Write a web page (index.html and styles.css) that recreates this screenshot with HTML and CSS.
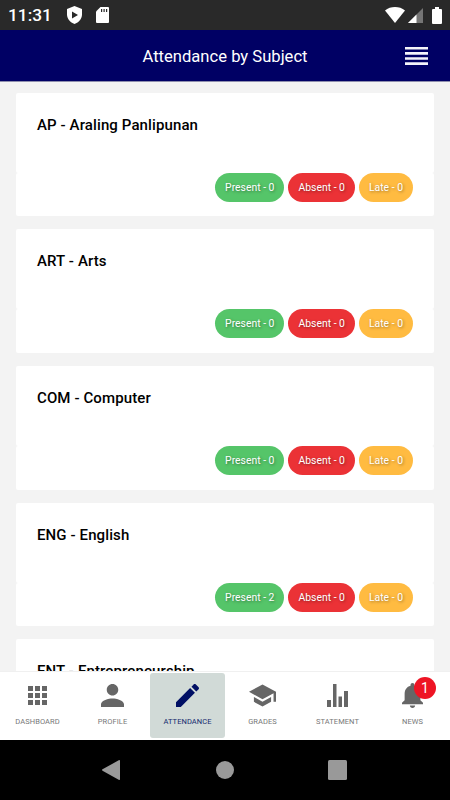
FILE: index.html
```html
<!DOCTYPE html>
<html lang="en">
<head>
  <meta charset="UTF-8">
  <title>Attendance by Subject</title>
  <meta name="viewport" content="width=device-width, initial-scale=1.0">
  <link rel="stylesheet" href="styles.css">
</head>
<body>
  <div class="status-bar">
    <span class="time">11:31</span>
    <svg class="shield" width="15" height="18" viewBox="0 0 15 18"><path fill="#fff" d="M7.5 0L15 3v5.500c0 4.300-3.200 8.100-7.500 9.500C3.200 16.600 0 12.800 0 8.500V3z"/><path fill="#292929" d="M5 5.500v7l6-3.500z"/></svg>
    <svg class="sdcard" width="13" height="16" viewBox="0 0 13 16"><path fill="#fff" d="M4.500 0H12a1 1 0 0 1 1 1v14a1 1 0 0 1-1 1H1a1 1 0 0 1-1-1V4.500z"/><path fill="#292929" d="M5 2h1.200v3H5zM7.500 2h1.200v3H7.500zM10 2h1.200v3H10z"/></svg>
    <div class="status-right">
      <svg width="20" height="16" viewBox="0 0 20 16"><path fill="#fff" d="M10 16L0 3.500C5.500-1.100 14.500-1.100 20 3.500z"/></svg>
      <svg class="signal" width="15" height="15" viewBox="0 0 15 15"><path fill="#757575" d="M15 0v15H0z"/><path fill="#fff" d="M8.500 6.500V15H0z"/></svg>
      <svg class="battery" width="10" height="17" viewBox="0 0 10 17"><path fill="#fff" d="M3 0h4v2h2a1 1 0 0 1 1 1v13a1 1 0 0 1-1 1H1a1 1 0 0 1-1-1V3a1 1 0 0 1 1-1h2z"/></svg>
    </div>
  </div>

  <header>
    <h1>Attendance by Subject</h1>
    <svg class="menu" width="23" height="18" viewBox="0 0 23 18"><path d="M0 0h23v2.600H0zM0 5.100h23v2.600H0zM0 10.200h23v2.600H0zM0 15.300h23v2.600H0z"/></svg>
  </header>

  <main class="subjects">
    <div class="card">
      <h2>AP - Araling Panlipunan</h2>
      <div class="counts">
        <span class="pill present">Present - 0</span>
        <span class="pill absent">Absent - 0</span>
        <span class="pill late">Late - 0</span>
      </div>
    </div>
    <div class="card">
      <h2>ART - Arts</h2>
      <div class="counts">
        <span class="pill present">Present - 0</span>
        <span class="pill absent">Absent - 0</span>
        <span class="pill late">Late - 0</span>
      </div>
    </div>
    <div class="card">
      <h2>COM - Computer</h2>
      <div class="counts">
        <span class="pill present">Present - 0</span>
        <span class="pill absent">Absent - 0</span>
        <span class="pill late">Late - 0</span>
      </div>
    </div>
    <div class="card">
      <h2>ENG - English</h2>
      <div class="counts">
        <span class="pill present">Present - 2</span>
        <span class="pill absent">Absent - 0</span>
        <span class="pill late">Late - 0</span>
      </div>
    </div>
    <div class="card">
      <h2>ENT - Entrepreneurship</h2>
    </div>
  </main>

  <nav class="tabs">
    <a class="tab">
      <span class="icon"><svg width="19" height="19" viewBox="0 0 19 19"><path d="M0 0h5v5H0zM7 0h5v5H7zM14 0h5v5h-5zM0 7h5v5H0zM7 7h5v5H7zM14 7h5v5h-5zM0 14h5v5H0zM7 14h5v5H7zM14 14h5v5h-5z"/></svg></span>
      <span class="label">DASHBOARD</span>
    </a>
    <a class="tab">
      <span class="icon"><svg width="23" height="23" viewBox="4 4 16 16"><path d="M12 12c2.210 0 4-1.790 4-4s-1.790-4-4-4-4 1.790-4 4 1.790 4 4 4zm0 2c-2.670 0-8 1.340-8 4v2h16v-2c0-2.660-5.330-4-8-4z"/></svg></span>
      <span class="label">PROFILE</span>
    </a>
    <a class="tab active">
      <span class="icon"><svg width="23" height="23" viewBox="3 3 18 18"><path d="M3 17.250V21h3.750L17.810 9.940l-3.750-3.750L3 17.250zM20.710 7.040c.39-.39.39-1.020 0-1.410l-2.340-2.340c-.39-.39-1.020-.39-1.410 0l-1.830 1.830 3.750 3.750 1.830-1.830z"/></svg></span>
      <span class="label">ATTENDANCE</span>
    </a>
    <a class="tab">
      <span class="icon"><svg width="27" height="23" viewBox="1 3 22 18"><path d="M5 13.180v4L12 21l7-3.820v-4L12 17l-7-3.820zM12 3L1 9l11 6 9-4.910V17h2V9L12 3z"/></svg></span>
      <span class="label">GRADES</span>
    </a>
    <a class="tab">
      <span class="icon"><svg width="21" height="23" viewBox="0 0 21 23"><path d="M0 16h4v7H0zM6 0h3.500v23H6zM11.500 12.500H15V23h-3.500zM17 7h4v16h-4z"/></svg></span>
      <span class="label">STATEMENT</span>
    </a>
    <a class="tab">
      <span class="icon"><svg width="21" height="25" viewBox="4 2.500 16 19.500" preserveAspectRatio="none"><path d="M12 22c1.100 0 2-.9 2-2h-4c0 1.100.89 2 2 2zm6-6v-5c0-3.070-1.640-5.640-4.500-6.320V4c0-.83-.67-1.500-1.500-1.500s-1.500.67-1.500 1.500v.68C7.630 5.360 6 7.920 6 11v5l-2 2v1h16v-1l-2-2z"/></svg><b class="badge">1</b></span>
      <span class="label">NEWS</span>
    </a>
  </nav>

  <div class="system-nav">
    <svg class="back" width="18" height="20" viewBox="0 0 18 20"><path fill="#999" d="M18 1v18q0 1.500-1.300.7L.5 10.700q-1-.7 0-1.400L16.700.3Q18-.5 18 1z"/></svg>
    <svg width="18" height="18" viewBox="0 0 18 18"><circle fill="#999" cx="9" cy="9" r="9"/></svg>
    <svg width="19" height="20" viewBox="0 0 19 20"><rect fill="#999" width="19" height="20" rx="1.500"/></svg>
  </div>
</body>
</html>
```
FILE: styles.css
```css
* {
  box-sizing: border-box;
}
body {
  margin: 0;
  height: 800px;
  display: flex;
  flex-direction: column;
  overflow: hidden;
  font-family: Roboto, "Liberation Sans", sans-serif;
  background: #f3f3f3;
  color: #000;
}
svg {
  display: block;
  flex: none;
}
.status-bar {
  flex: 0 0 30px;
  display: flex;
  align-items: center;
  padding: 0 8px;
  background: #292929;
  color: #fff;
}
.time {
  width: 59px;
  font-size: 17.300px;
  font-weight: 500;
  line-height: 30px;
}
.sdcard {
  margin-left: 14px;
}
.status-right {
  display: flex;
  align-items: center;
  margin-left: auto;
}
.signal {
  margin-left: 3px;
}
.battery {
  margin-left: 9px;
}
header {
  flex: 0 0 51.500px;
  display: grid;
  grid-template-columns: 1fr auto 1fr;
  align-items: center;
  padding: 0 22px;
  border-bottom: 1px solid #8f8fae;
  background: #000064;
  color: #fff;
}
h1 {
  grid-column: 2;
  margin: 0;
  padding-top: 2px;
  font-size: 16.600px;
  font-weight: 400;
}
.menu {
  justify-self: end;
  margin-top: 1px;
  fill: #f4f4fa;
}
.subjects {
  flex: 1;
  min-height: 0;
  overflow: hidden;
  display: flex;
  flex-direction: column;
  gap: 13px;
  padding: 11px 16px 0;
}
.card {
  flex: 0 0 123.700px;
}
h2 {
  height: 80px;
  margin: 0;
  padding: 22px 21px 0;
  border-radius: 2px;
  background: #fff;
  font-size: 15px;
  font-weight: 500;
  line-height: 20px;
  letter-spacing: 0.110px;
}
.counts {
  height: 43.700px;
  display: flex;
  justify-content: flex-end;
  gap: 4px;
  padding-right: 21px;
  border-radius: 2px;
  background: #fff;
}
.pill {
  height: 29px;
  padding: 0 10px;
  border-radius: 15px;
  color: #fff;
  font-size: 10.400px;
  line-height: 30px;
  white-space: nowrap;
  text-shadow: 1px 1px 3px rgba(0,0,0,0.4);
}
.present {
  background: #55c569;
}
.absent {
  background: #eb3236;
}
.late {
  background: #ffbb41;
}
.tabs {
  flex: 0 0 69px;
  display: grid;
  grid-template-columns: repeat(6, 1fr);
  padding: 1px 0 2px;
  border-top: 1px solid #f0f0f0;
  background: #fff;
  fill: #666;
}
.tab {
  display: flex;
  flex-direction: column;
  align-items: center;
  padding-top: 10px;
  border-radius: 3px;
  color: #777;
}
.tab.active {
  background: #d1dad7;
  color: #14296e;
  fill: #000f64;
}
.icon {
  position: relative;
  height: 25px;
  display: flex;
  align-items: center;
}
.badge {
  position: absolute;
  top: -6px;
  left: 12px;
  width: 22px;
  height: 22px;
  border-radius: 50%;
  background: #ee1424;
  color: #fff;
  font-size: 14px;
  font-weight: 400;
  line-height: 22px;
  text-align: center;
}
.label {
  margin-top: 9px;
  font-size: 7.500px;
  line-height: 10px;
  letter-spacing: 0.070px;
}
.system-nav {
  flex: 0 0 60px;
  display: grid;
  grid-template-columns: repeat(3, 112.500px);
  justify-content: center;
  justify-items: center;
  align-items: center;
  background: #000;
}
.back {
  margin-right: 3px;
}
```
